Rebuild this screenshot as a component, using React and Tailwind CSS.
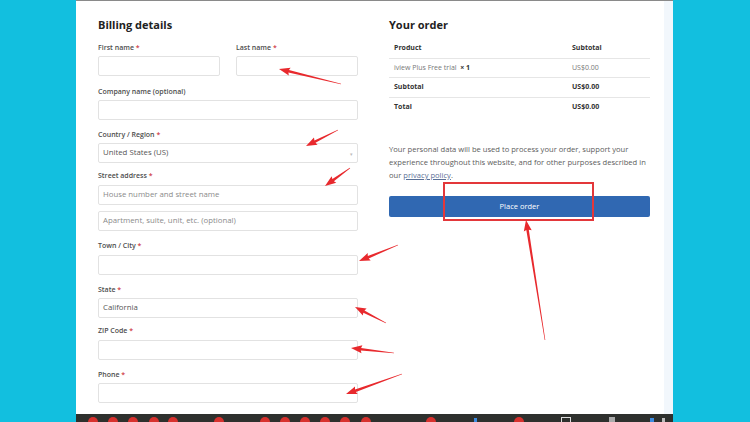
import React from 'react';

const font = { fontFamily: '"Open Sans", "Liberation Sans", sans-serif' };

// arrows drawn over the screenshot: [headX, headY, tailX, tailY]
const arrows = [
  [279, 69, 341, 84],
  [306, 146, 338, 130],
  [325, 186, 350, 168],
  [359, 261, 398, 245],
  [355, 307, 386, 323],
  [351, 348, 394, 353],
  [346, 394, 402, 374],
  [526, 220, 545, 340],
];

function arrowPoints([hx, hy, tx, ty]) {
  const dx = hx - tx;
  const dy = hy - ty;
  const len = Math.hypot(dx, dy);
  const ux = dx / len;
  const uy = dy / len;
  const nx = -uy;
  const ny = ux;
  const L = 10;
  const W = 4;
  const bx = hx - ux * L;
  const by = hy - uy * L;
  const pts = [
    [tx + nx * 0.3, ty + ny * 0.3],
    [bx + nx * 1.3, by + ny * 1.3],
    [bx - ux * 1 + nx * W, by - uy * 1 + ny * W],
    [hx, hy],
    [bx - ux * 1 - nx * W, by - uy * 1 - ny * W],
    [bx - nx * 1.3, by - ny * 1.3],
    [tx - nx * 0.3, ty - ny * 0.3],
  ];
  return pts.map((p) => p.map((v) => v.toFixed(1)).join(',')).join(' ');
}

function Label({ children, required, className = '' }) {
  return (
    <div className={`h-[10px] text-[7px] leading-[10px] font-semibold text-[#4d4d4d] ${className}`}>
      {children}
      {required && <span className="text-[#d0434a]"> *</span>}
    </div>
  );
}

function Input({ placeholder, value, className = '', select }) {
  return (
    <div
      className={`relative h-[20px] rounded-[2px] border border-[#e2e2e2] bg-white pl-[4px] flex items-center text-[7.8px] ${className}`}
    >
      {value && <span className="text-[#555]">{value}</span>}
      {placeholder && <span className="text-[#8a8a8a]">{placeholder}</span>}
      {select && <span className="absolute right-[4px] top-[7px] text-[5px] text-[#bbb]">▾</span>}
    </div>
  );
}

function Field({ label, required, mt, gap, children }) {
  return (
    <div style={{ marginTop: mt }}>
      <Label required={required}>{label}</Label>
      <div style={{ marginTop: gap }}>{children}</div>
    </div>
  );
}

function Billing() {
  return (
    <div className="w-[260px] shrink-0">
      <h2 className="h-[16px] text-[11px] leading-[16px] font-bold text-[#222]">Billing details</h2>
      <div className="mt-[10px] flex gap-[16px]">
        <div className="flex-1">
          <Label required>First name</Label>
          <Input className="mt-[3px]" />
        </div>
        <div className="flex-1">
          <Label required>Last name</Label>
          <Input className="mt-[3px]" />
        </div>
      </div>
      <Field label="Company name (optional)" mt={11} gap={3}>
        <Input />
      </Field>
      <Field label="Country / Region" required mt={10} gap={3}>
        <Input value="United States (US)" select />
      </Field>
      <Field label="Street address" required mt={8} gap={4}>
        <Input placeholder="House number and street name" />
        <Input className="mt-[6px]" placeholder="Apartment, suite, unit, etc. (optional)" />
      </Field>
      <Field label="Town / City" required mt={10} gap={4}>
        <Input />
      </Field>
      <Field label="State" required mt={10} gap={3}>
        <Input value="California" />
      </Field>
      <Field label="ZIP Code" required mt={8} gap={4}>
        <Input />
      </Field>
      <Field label="Phone" required mt={10} gap={3}>
        <Input />
      </Field>
    </div>
  );
}

function Row({ left, right, bold, last }) {
  return (
    <div
      className={`flex h-[19.5px] items-center pl-[5px] text-[7px] ${last ? '' : 'border-b border-[#e6e6e6]'} ${
        bold ? 'font-bold text-[#333]' : 'text-[#777]'
      }`}
    >
      <div className="w-[178px]">{left}</div>
      <div>{right}</div>
    </div>
  );
}

function Order() {
  return (
    <div className="w-[261px] shrink-0">
      <h2 className="h-[16px] text-[11px] leading-[16px] font-bold text-[#222]">Your order</h2>
      <div className="mt-[6px]">
        <Row left="Product" right="Subtotal" bold />
        <Row
          left={
            <span>
              iview Plus Free trial&nbsp; <span className="font-bold text-[#333]">× 1</span>
            </span>
          }
          right="US$0.00"
        />
        <Row left="Subtotal" right="US$0.00" bold />
        <Row left="Total" right="US$0.00" bold last />
      </div>
      <p className="mt-[26px] text-[7.6px] leading-[13px] text-[#5c5c5c]">
        Your personal data will be used to process your order, support your experience throughout this website, and
        for other purposes described in our <span className="text-[#5a6f95] underline">privacy policy</span>.
      </p>
      <button className="mt-[14px] h-[21px] w-full rounded-[2px] bg-[#3068b2] text-[7.5px] text-white">
        Place order
      </button>
    </div>
  );
}

function Taskbar() {
  const reds = [93, 113, 133, 154, 173, 219, 265, 285, 305, 325, 345, 366, 431, 519];
  return (
    <div className="relative h-[8px] shrink-0 overflow-hidden bg-[#2e302d]">
      {reds.map((x) => (
        <div
          key={x}
          className="absolute top-[3px] h-[10px] w-[10px] rounded-full bg-[#d8312e]"
          style={{ left: x - 76 - 5 }}
        />
      ))}
      <div className="absolute left-[398px] top-[4px] h-[6px] w-[3px] bg-[#3d8be0]" />
      <div className="absolute left-[485px] top-[3px] h-[8px] w-[10px] border border-[#ddd]" />
      <div className="absolute left-[533px] top-[3px] h-[6px] w-[6px] bg-[#aaa]" />
      <div className="absolute left-[574px] top-[4px] h-[6px] w-[4px] bg-[#3d8be0]" />
      <div className="absolute left-[586px] top-[4px] h-[6px] w-[3px] bg-[#bbb]" />
    </div>
  );
}

export default function App() {
  return (
    <div className="relative flex h-[422px] w-[750px] overflow-hidden bg-[#12bfdf]" style={font}>
      <div className="ml-[76px] flex h-full w-[597px] flex-col border-t border-[#8a8a8a] bg-white">
        <div className="flex min-h-0 flex-1 overflow-hidden">
          <div className="flex flex-1 gap-[31px] pl-[22px] pt-[16px]">
            <Billing />
            <Order />
          </div>
          <div className="w-[9px] shrink-0 bg-[#f2f7fc]" />
        </div>
        <Taskbar />
      </div>

      {/* red annotations */}
      <div className="pointer-events-none absolute left-[443px] top-[182px] h-[39px] w-[151px] border-2 border-[#e3373a]" />
      <svg className="pointer-events-none absolute left-0 top-0" width="750" height="422">
        {arrows.map((a, i) => (
          <polygon key={i} points={arrowPoints(a)} fill="#e8292d" />
        ))}
      </svg>
    </div>
  );
}
